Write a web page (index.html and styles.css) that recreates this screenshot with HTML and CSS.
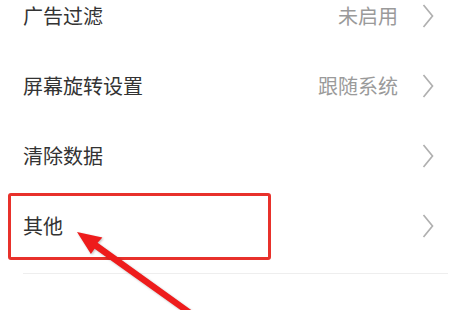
FILE: index.html
```html
<!DOCTYPE html>
<html lang="zh-CN">
<head>
<meta charset="utf-8">
<link rel="stylesheet" href="styles.css">
</head>
<body>
<div class="page">
  <div class="group">
    <div class="row"><span class="label">广告过滤</span><span class="value">未启用</span><svg class="chev" viewBox="0 0 12 24"><path d="M1.5 1 L10.5 12 L1.5 23" /></svg></div>
    <div class="row"><span class="label">屏幕旋转设置</span><span class="value">跟随系统</span><svg class="chev" viewBox="0 0 12 24"><path d="M1.5 1 L10.5 12 L1.5 23" /></svg></div>
    <div class="row"><span class="label">清除数据</span><span class="value"></span><svg class="chev" viewBox="0 0 12 24"><path d="M1.5 1 L10.5 12 L1.5 23" /></svg></div>
    <div class="row"><span class="label">其他</span><span class="value"></span><svg class="chev" viewBox="0 0 12 24"><path d="M1.5 1 L10.5 12 L1.5 23" /></svg></div>
  </div>
  <div class="group second">
    <div class="row"><span class="label">关于</span><span class="value"></span><svg class="chev" viewBox="0 0 12 24"><path d="M1.5 1 L10.5 12 L1.5 23" /></svg></div>
  </div>
  <div class="highlight"></div>
  <svg class="arrow" viewBox="0 0 451 310" width="451" height="310">
    <polygon points="77,232 102.4,237.6 97.6,242.8 194,312 189,316 94.6,248.8 90.9,254" />
  </svg>
</div>
</body>
</html>
```
FILE: styles.css
```css
html, body {
  margin: 0;
  padding: 0;
  background: #ffffff;
}
.page {
  position: relative;
  width: 451px;
  height: 310px;
  overflow: hidden;
  font-family: "Noto Sans CJK SC", "Noto Sans", sans-serif;
}
.group {
  margin-top: -19px;
  margin-left: 23px;
  padding-bottom: 12px;
  border-bottom: 1px solid #eeeeee;
  margin-right: 3px;
}
.group.second {
  margin-top: 0;
  padding-top: 14px;
  border-bottom: none;
}
.row {
  display: flex;
  align-items: center;
  height: 70px;
  padding-right: 14px;
}
.label {
  flex: 1;
  font-size: 20px;
  line-height: 24px;
  color: #333333;
}
.value {
  font-size: 20px;
  line-height: 24px;
  color: #9a9a9a;
  margin-right: 24px;
}
.chev {
  width: 12px;
  height: 24px;
  fill: none;
  stroke: #b0b0b0;
  stroke-width: 1.7;
}
.highlight {
  position: absolute;
  left: 8px;
  top: 193px;
  width: 257px;
  height: 61px;
  border: 3px solid #e8312b;
  border-radius: 3px;
}
.arrow {
  position: absolute;
  left: 0;
  top: 0;
  fill: #ee1c1c;
  filter: drop-shadow(1px 1px 1px rgba(0,0,0,0.25));
}
```
